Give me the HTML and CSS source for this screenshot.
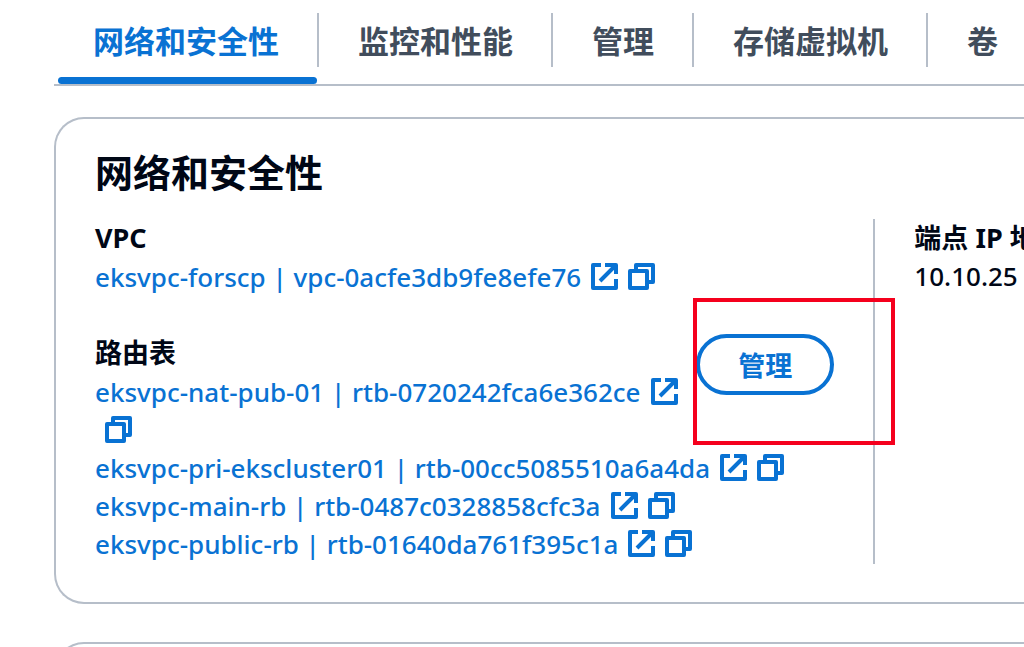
FILE: index.html
```html
<!DOCTYPE html>
<html lang="zh-CN">
<head>
<meta charset="utf-8">
<title>网络和安全性</title>
<link rel="stylesheet" href="styles.css">
</head>

<body>
  <svg class="sprite" aria-hidden="true">
    <symbol id="external" viewBox="0 0 27 27">
      <path d="M10 2H2v23h23v-9M14 2h11v9M9 18L24 3" />
    </symbol>
    <symbol id="copy" viewBox="0 0 27 27">
      <path d="M2 8h17v17H2zM8 7V2h17v17h-5" />
    </symbol>
  </svg>

  <nav class="tabs">
    <a class="tab active" href="#network">网络和安全性</a>
    <a class="tab" href="#monitoring">监控和性能</a>
    <a class="tab" href="#admin">管理</a>
    <a class="tab" href="#svm">存储虚拟机</a>
    <a class="tab" href="#volumes">卷</a>
  </nav>

  <section class="card" id="network">
    <h2>网络和安全性</h2>
    <div class="columns">
      <div class="column">
        <h3>VPC</h3>
        <ul class="links vpc">
          <li>
            <a href="#vpc">eksvpc-forscp | vpc-0acfe3db9fe8efe76<svg class="icon"><use href="#external" /></svg></a><button class="copy" type="button" aria-label="复制"><svg class="icon"><use href="#copy" /></svg></button>
          </li>
        </ul>

        <div class="manage">
          <button class="button" type="button">管理</button>
          <div class="highlight"></div>
        </div>
        <h3>路由表</h3>
        <ul class="links">
          <li>
            <a href="#rtb1">eksvpc-nat-pub-01 | rtb-0720242fca6e362ce<svg class="icon"><use href="#external" /></svg></a><button class="copy" type="button" aria-label="复制"><svg class="icon"><use href="#copy" /></svg></button>
          </li>
          <li>
            <a href="#rtb2">eksvpc-pri-ekscluster01 | rtb-00cc5085510a6a4da<svg class="icon"><use href="#external" /></svg></a><button class="copy" type="button" aria-label="复制"><svg class="icon"><use href="#copy" /></svg></button>
          </li>
          <li>
            <a href="#rtb3">eksvpc-main-rb | rtb-0487c0328858cfc3a<svg class="icon"><use href="#external" /></svg></a><button class="copy" type="button" aria-label="复制"><svg class="icon"><use href="#copy" /></svg></button>
          </li>
          <li>
            <a href="#rtb4">eksvpc-public-rb | rtb-01640da761f395c1a<svg class="icon"><use href="#external" /></svg></a><button class="copy" type="button" aria-label="复制"><svg class="icon"><use href="#copy" /></svg></button>
          </li>
        </ul>
      </div>
      <div class="column endpoint">
        <h3>端点 IP 地址</h3>
        <p>10.10.25</p>
      </div>
    </div>
  </section>

  <section class="card next"></section>
</body>

</html>
```
FILE: styles.css
```css
body {
  margin: 0;
  padding: 13px 0 0 54px;
  font: 500 26px/38px "Noto Sans", "Noto Sans CJK SC", sans-serif;
  color: #000716;
  background: #fff;
  overflow: hidden;
}

h2, h3, p, ul {
  margin: 0;
  padding: 0;
}

a {
  color: #0972d3;
  text-decoration: none;
}

.sprite {
  position: absolute;
  width: 0;
  height: 0;
}

.tabs {
  display: flex;
  border-bottom: 2px solid #b6bec9;
}

.tab {
  position: relative;
  flex: none;
  height: 54px;
  margin-bottom: 17px;
  padding: 0 38px 0 39px;
  border-right: 2px solid #b6bec9;
  font: bold 31px/54px "Noto Sans CJK SC", sans-serif;
  color: #414d5c;
}

.tab:last-child {
  border-right: none;
}

.tab.active {
  color: #0972d3;
}

.tab.active:after {
  content: "";
  position: absolute;
  left: 4px;
  right: 0;
  bottom: -17px;
  height: 7px;
  border-radius: 4px;
  background: #0972d3;
}

.card {
  margin-top: 31px;
  padding: 30px 0 38px 39px;
  border: 2px solid #b6bec9;
  border-right: none;
  border-radius: 30px 0 0 30px;
}

.card.next {
  margin-top: 38px;
}

h2 {
  margin-bottom: 26px;
  font: bold 38px/44px "Noto Sans CJK SC", sans-serif;
}

h3 {
  font-size: 27px;
  line-height: 38px;
}

.columns {
  display: flex;
}

.column {
  flex: 0 0 84%;
  box-sizing: border-box;
  padding-right: 39px;
  border-right: 2px solid #b6bec9;
}

.column.endpoint {
  flex: 1;
  min-width: 0;
  padding: 0 0 0 39px;
  border: none;
  white-space: nowrap;
  overflow: hidden;
}

.links {
  padding: 1px 0;
  list-style: none;
}

.vpc {
  margin-bottom: 37px;
}

.icon {
  width: 27px;
  height: 27px;
  margin-left: 10px;
  vertical-align: -3px;
  fill: none;
  stroke: #0972d3;
  stroke-width: 4;
  stroke-linejoin: round;
}

.copy {
  margin: 0;
  padding: 0;
  border: none;
  background: none;
  font: inherit;
}

.manage {
  position: relative;
  float: right;
}

.button {
  display: block;
  width: 138px;
  height: 61px;
  padding: 0;
  border: 4px solid #0972d3;
  border-radius: 31px;
  background: #fff;
  font: bold 27px/38px "Noto Sans CJK SC", sans-serif;
  color: #0972d3;
}

/* marks the manage button */
.highlight {
  position: absolute;
  top: -36px;
  left: -3px;
  width: 194px;
  height: 139px;
  border: 4px solid #f5001d;
  pointer-events: none;
}
```
